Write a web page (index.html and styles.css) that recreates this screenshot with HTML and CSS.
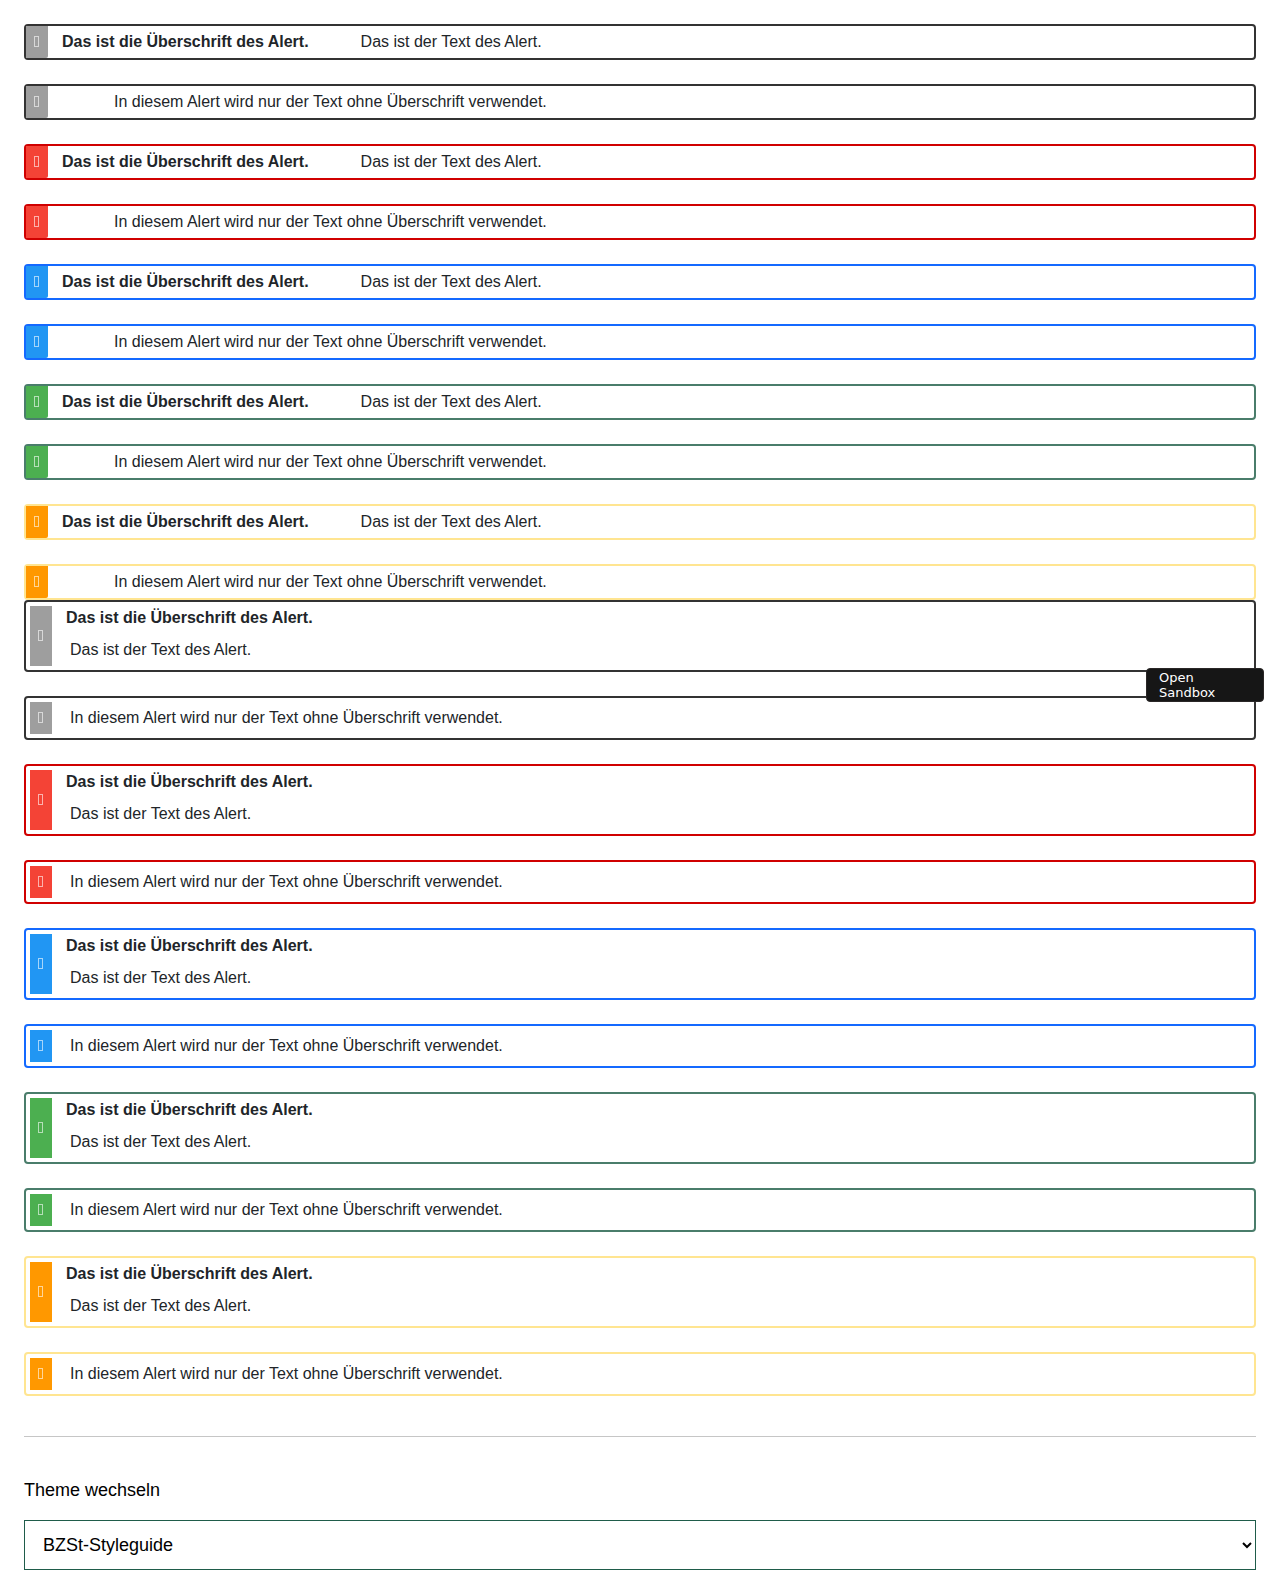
FILE: index.html
```
<!DOCTYPE html>
<html lang="de">
<head>
<meta charset="utf-8">
<meta name="viewport" content="width=device-width, initial-scale=1">
<title>Alert</title>
<link rel="stylesheet" href="styles.css">
</head>
<body>
<svg class="sprite" width="0" height="0" aria-hidden="true">
  <symbol id="glyph" viewBox="0 0 5 11"><rect x=".5" y=".5" width="4" height="10" fill="none" stroke="currentColor"/></symbol>
</svg>
<main class="page">
  <section class="alerts alerts-inline">
    <div class="alert neutral" role="alert"><span class="icon"><svg class="glyph"><use href="#glyph"/></svg></span><strong class="title">Das ist die Überschrift des Alert.</strong><p class="text">Das ist der Text des Alert.</p></div>
    <div class="alert neutral" role="alert"><span class="icon"><svg class="glyph"><use href="#glyph"/></svg></span><p class="text">In diesem Alert wird nur der Text ohne Überschrift verwendet.</p></div>
    <div class="alert error" role="alert"><span class="icon"><svg class="glyph"><use href="#glyph"/></svg></span><strong class="title">Das ist die Überschrift des Alert.</strong><p class="text">Das ist der Text des Alert.</p></div>
    <div class="alert error" role="alert"><span class="icon"><svg class="glyph"><use href="#glyph"/></svg></span><p class="text">In diesem Alert wird nur der Text ohne Überschrift verwendet.</p></div>
    <div class="alert info" role="alert"><span class="icon"><svg class="glyph"><use href="#glyph"/></svg></span><strong class="title">Das ist die Überschrift des Alert.</strong><p class="text">Das ist der Text des Alert.</p></div>
    <div class="alert info" role="alert"><span class="icon"><svg class="glyph"><use href="#glyph"/></svg></span><p class="text">In diesem Alert wird nur der Text ohne Überschrift verwendet.</p></div>
    <div class="alert success" role="alert"><span class="icon"><svg class="glyph"><use href="#glyph"/></svg></span><strong class="title">Das ist die Überschrift des Alert.</strong><p class="text">Das ist der Text des Alert.</p></div>
    <div class="alert success" role="alert"><span class="icon"><svg class="glyph"><use href="#glyph"/></svg></span><p class="text">In diesem Alert wird nur der Text ohne Überschrift verwendet.</p></div>
    <div class="alert warning" role="alert"><span class="icon"><svg class="glyph"><use href="#glyph"/></svg></span><strong class="title">Das ist die Überschrift des Alert.</strong><p class="text">Das ist der Text des Alert.</p></div>
    <div class="alert warning" role="alert"><span class="icon"><svg class="glyph"><use href="#glyph"/></svg></span><p class="text">In diesem Alert wird nur der Text ohne Überschrift verwendet.</p></div>
  </section>

  <section class="alerts alerts-stacked">
    <div class="alert neutral" role="alert"><span class="icon"><svg class="glyph"><use href="#glyph"/></svg></span><div class="content"><strong class="title">Das ist die Überschrift des Alert.</strong><p class="text">Das ist der Text des Alert.</p></div></div>
    <div class="alert neutral" role="alert"><span class="icon"><svg class="glyph"><use href="#glyph"/></svg></span><div class="content"><p class="text">In diesem Alert wird nur der Text ohne Überschrift verwendet.</p></div></div>
    <div class="alert error" role="alert"><span class="icon"><svg class="glyph"><use href="#glyph"/></svg></span><div class="content"><strong class="title">Das ist die Überschrift des Alert.</strong><p class="text">Das ist der Text des Alert.</p></div></div>
    <div class="alert error" role="alert"><span class="icon"><svg class="glyph"><use href="#glyph"/></svg></span><div class="content"><p class="text">In diesem Alert wird nur der Text ohne Überschrift verwendet.</p></div></div>
    <div class="alert info" role="alert"><span class="icon"><svg class="glyph"><use href="#glyph"/></svg></span><div class="content"><strong class="title">Das ist die Überschrift des Alert.</strong><p class="text">Das ist der Text des Alert.</p></div></div>
    <div class="alert info" role="alert"><span class="icon"><svg class="glyph"><use href="#glyph"/></svg></span><div class="content"><p class="text">In diesem Alert wird nur der Text ohne Überschrift verwendet.</p></div></div>
    <div class="alert success" role="alert"><span class="icon"><svg class="glyph"><use href="#glyph"/></svg></span><div class="content"><strong class="title">Das ist die Überschrift des Alert.</strong><p class="text">Das ist der Text des Alert.</p></div></div>
    <div class="alert success" role="alert"><span class="icon"><svg class="glyph"><use href="#glyph"/></svg></span><div class="content"><p class="text">In diesem Alert wird nur der Text ohne Überschrift verwendet.</p></div></div>
    <div class="alert warning" role="alert"><span class="icon"><svg class="glyph"><use href="#glyph"/></svg></span><div class="content"><strong class="title">Das ist die Überschrift des Alert.</strong><p class="text">Das ist der Text des Alert.</p></div></div>
    <div class="alert warning" role="alert"><span class="icon"><svg class="glyph"><use href="#glyph"/></svg></span><div class="content"><p class="text">In diesem Alert wird nur der Text ohne Überschrift verwendet.</p></div></div>
    <button class="sandbox" type="button">Open Sandbox</button>
  </section>

  <hr class="divider">

  <div class="field">
    <label for="theme">Theme wechseln</label>
    <select id="theme" class="select"><option>BZSt-Styleguide</option></select>
  </div>
</main>
</body>
</html>
```
FILE: styles.css
```
* { box-sizing: border-box; }

body {
  margin: 0;
  background: #fff;
  color: #212529;
  font: 16px/24px "Liberation Sans", Arial, sans-serif;
}

.sprite { position: absolute; }

.page { padding: 24px; }

.alerts {
  display: flex;
  flex-direction: column;
  gap: 24px;
}

.alert {
  display: flex;
  border: 2px solid var(--line);
  border-radius: 4px;
}

.neutral { --line: #333333; --fill: #9e9e9e; }
.error { --line: #d00000; --fill: #f44336; }
.info { --line: #1469ff; --fill: #2196f3; }
.success { --line: #4a7d6b; --fill: #4caf50; }
.warning { --line: #ffe591; --fill: #ff9800; }

.icon {
  display: flex;
  flex: none;
  align-items: center;
  justify-content: center;
  width: 22px;
  padding: 0 1px 1px 0;
  background: var(--fill);
  color: rgba(255, 255, 255, 0.6);
}

.glyph {
  display: block;
  width: 5px;
  height: 11px;
}

.text { margin: 0; }

.alerts-inline .icon { border-radius: 0 0 2px 0; }
.alerts-inline .title { margin-left: 14px; padding: 4px 0; }
.alerts-inline .text { margin-left: 52px; padding: 4px 0; }
.alerts-inline .icon + .text { margin-left: 66px; }

.alerts-stacked { position: relative; }
.alerts-stacked .alert { padding: 4px; }
.alerts-stacked .content { margin-left: 14px; }
.alerts-stacked .title { display: block; margin-bottom: 4px; }
.alerts-stacked .text { padding: 4px; }

.sandbox {
  position: absolute;
  top: 68px;
  right: -8px;
  width: 118px;
  padding: 1px 12px;
  border: 1px solid #2a2727;
  border-radius: 4px;
  background: #161616;
  color: #fff;
  font: 13px/15px "DejaVu Sans", sans-serif;
  text-align: left;
}

.divider {
  height: 1px;
  margin: 40px 0;
  border: 0;
  background: #c6c6c6;
}

.field {
  display: flex;
  flex-direction: column;
  gap: 16px;
  color: #000;
  font-size: 18px;
  line-height: 27px;
}

.select {
  width: 100%;
  height: 50px;
  padding: 0 0 0 14px;
  border: 1px solid #1f5c4a;
  border-radius: 0;
  background-color: #fff;
  color: #000;
  font: inherit;
}
```
